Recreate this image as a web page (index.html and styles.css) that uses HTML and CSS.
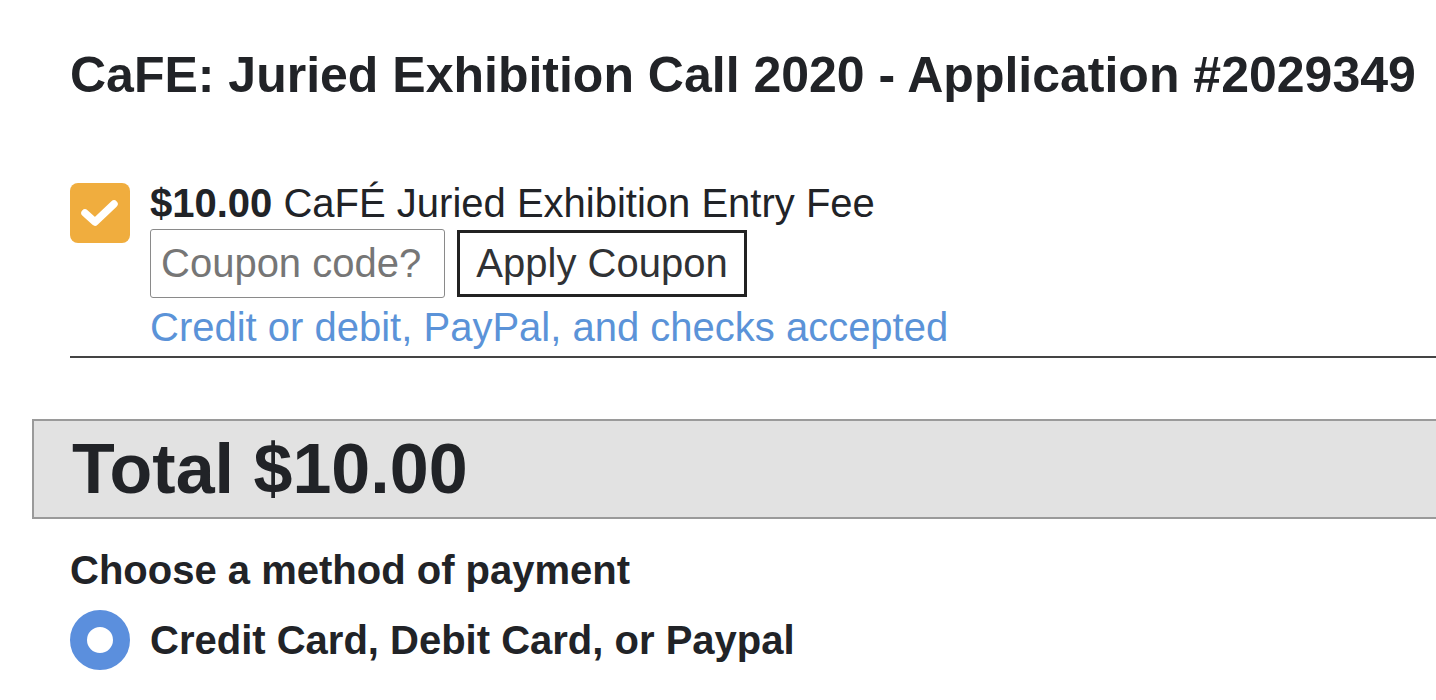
FILE: index.html
```html
<!DOCTYPE html>
<html lang="en">
<head>
    <meta charset="UTF-8">
    <title>Application #2029349</title>
    <link rel="stylesheet" href="styles.css">
</head>
<body>
    <div class="page">
        <h1 class="title">CaFE: Juried Exhibition Call 2020 - Application #2029349</h1>

        <!-- fee line -->
        <div class="fee">
            <span class="check">
                <svg width="40" height="30" viewBox="0 0 40 30"><path d="M5 15 L15 24 L34 6" fill="none" stroke="#fff" stroke-width="7.5" stroke-linecap="round" stroke-linejoin="round"/></svg>
            </span>
            <div class="fee-body">
                <div class="fee-name"><b>$10.00</b> CaFÉ Juried Exhibition Entry Fee</div>
                <div class="coupon">
                    <input class="coupon-input" type="text" placeholder="Coupon code?">
                    <button class="coupon-btn">Apply Coupon</button>
                </div>
                <div class="accepted">Credit or debit, PayPal, and checks accepted</div>
            </div>
        </div>
        <hr class="rule">

        <div class="total">Total $10.00</div>

        <h3 class="method">Choose a method of payment</h3>
        <label class="radio-row">
            <span class="radio"></span>
            <span>Credit Card, Debit Card, or Paypal</span>
        </label>
    </div>
</body>
</html>
```

FILE: styles.css
```css
body {
    margin: 0;
    font-family: "Liberation Sans", Arial, sans-serif;
    color: #212327;
    background: #fff;
}

.page {
    padding: 49px 0 0 32px;
}

.title {
    font-size: 50px;
    font-weight: bold;
    margin: 0 0 0 38px;
    line-height: 52px;
    white-space: nowrap;
}

.fee {
    display: flex;
    margin: 80px 0 0 38px;
}

.check {
    width: 60px;
    height: 60px;
    border-radius: 8px;
    background: #f0ad3e;
    display: flex;
    align-items: center;
    justify-content: center;
    flex-shrink: 0;
    margin-top: 2px;
}

.fee-body {
    margin-left: 20px;
}

.fee-name {
    font-size: 40px;
    line-height: 44px;
}

.coupon {
    display: flex;
    align-items: center;
    gap: 12px;
    margin-top: 4px;
}

.coupon-input {
    width: 295px;
    height: 69px;
    box-sizing: border-box;
    border: 1px solid #8a8a8a;
    border-radius: 3px;
    padding: 0 10px;
    font-family: inherit;
    font-size: 40px;
    color: #212327;
}

.coupon-input::placeholder {
    color: #767676;
}

.coupon-btn {
    width: 290px;
    height: 67px;
    box-sizing: border-box;
    border: 3px solid #222;
    background: #fff;
    font-family: inherit;
    font-size: 40px;
    color: #303235;
    padding: 0;
}

.accepted {
    color: #5b93d8;
    font-size: 40px;
    line-height: 58px;
    white-space: nowrap;
}

.rule {
    border: 0;
    border-top: 2px solid #444;
    margin: 0 0 0 38px;
}

.total {
    margin-top: 61px;
    background: #e2e2e2;
    border: 2px solid #9a9a9a;
    border-right: 0;
    height: 100px;
    box-sizing: border-box;
    padding-left: 38px;
    font-size: 70px;
    font-weight: bold;
    line-height: 96px;
}

.method {
    font-size: 40px;
    margin: 29px 0 0 38px;
    line-height: 44px;
}

.radio-row {
    display: flex;
    align-items: center;
    gap: 20px;
    margin: 18px 0 0 38px;
    font-size: 40px;
    font-weight: bold;
}

.radio {
    width: 60px;
    height: 60px;
    box-sizing: border-box;
    border-radius: 50%;
    border: 17px solid #5b8fdd;
    background: #fff;
}
```
